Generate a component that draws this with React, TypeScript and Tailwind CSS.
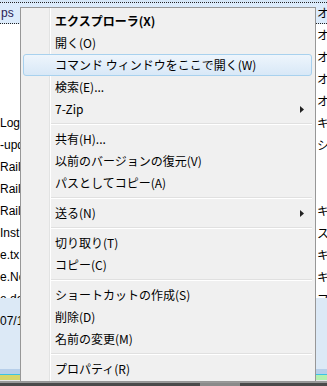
const font = "font-['Noto_Sans_CJK_JP','Noto_Sans_CJK_SC',sans-serif]";

type Entry =
  | { kind: 'item'; label: string; bold?: boolean; active?: boolean; submenu?: boolean }
  | { kind: 'sep' };

const menu: Entry[] = [
  { kind: 'item', label: 'エクスプローラ(X)', bold: true },
  { kind: 'item', label: '開く(O)' },
  { kind: 'item', label: 'コマンド ウィンドウをここで開く(W)', active: true },
  { kind: 'item', label: '検索(E)...' },
  { kind: 'item', label: '7-Zip', submenu: true },
  { kind: 'sep' },
  { kind: 'item', label: '共有(H)...' },
  { kind: 'item', label: '以前のバージョンの復元(V)' },
  { kind: 'item', label: 'パスとしてコピー(A)' },
  { kind: 'sep' },
  { kind: 'item', label: '送る(N)', submenu: true },
  { kind: 'sep' },
  { kind: 'item', label: '切り取り(T)' },
  { kind: 'item', label: 'コピー(C)' },
  { kind: 'sep' },
  { kind: 'item', label: 'ショートカットの作成(S)' },
  { kind: 'item', label: '削除(D)' },
  { kind: 'item', label: '名前の変更(M)' },
  { kind: 'sep' },
  { kind: 'item', label: 'プロパティ(R)' },
];

// rows of the explorer list behind the menu: [name fragment, type fragment]
const rows: [string, string][] = [
  ['ps', 'オフィス'],
  ['', 'オフィス'],
  ['', 'オフィス'],
  ['', 'オフィス'],
  ['', 'オフィス'],
  ['Log', 'キスト'],
  ['-upd', 'ショート'],
  ['Rails', ''],
  ['Rails', ''],
  ['Rails', 'キスト'],
  ['Inst', 'スト'],
  ['e.tx', 'キスト'],
  ['e.Not', 'キスト'],
  ['e.da', 'ファイル'],
];

function Arrow() {
  return (
    <svg width="4" height="7" viewBox="0 0 4 7" className="block">
      <polygon points="0,0 4,3.5 0,7" fill="#222" />
    </svg>
  );
}

function ContextMenu() {
  return (
    <div className="absolute left-[20px] top-[7px] w-[296px] border border-[#979797] bg-[#f0f0f0] pt-[2px] pb-px">
      <div className="absolute inset-y-0 left-[28px] w-px bg-[#e2e3e3]" />
      <div className="absolute inset-y-0 left-[29px] w-px bg-white" />
      {menu.map((m, i) =>
        m.kind === 'sep' ? (
          <div key={i} className="relative flex h-[8px] items-center pl-[30px] pr-[3px]">
            <div className="h-[2px] w-full border-t border-[#e0e0e0] border-b border-b-white" />
          </div>
        ) : (
          <div
            key={i}
            className={
              'relative ml-[2px] mr-[3px] flex h-[22px] items-center justify-between rounded-[3px] border pl-[31px] pr-[7px] text-[12px] text-black ' +
              (m.active
                ? 'border-[#a8d1ee] bg-gradient-to-b from-[#eef5fc] to-[#d8e8f7]'
                : 'border-transparent') +
              (m.bold ? ' font-bold' : '')
            }
          >
            <span className="whitespace-pre leading-none">{m.label}</span>
            {m.submenu && <Arrow />}
          </div>
        )
      )}
    </div>
  );
}

export default function App() {
  return (
    <div className={`relative h-[386px] w-[327px] overflow-hidden bg-white ${font} text-[12px]`}>
      <div className="flex h-[298px] flex-col overflow-hidden">
        <div className="h-[2px] shrink-0 bg-[#d5e6f7]" />
        {rows.map(([name, type], i) => (
          <div
            key={i}
            className={
              'grid h-[22px] shrink-0 grid-cols-[317px_1fr] items-center whitespace-nowrap ' +
              (i === 0 ? 'border-y border-dotted border-[#222] bg-[#dcebfb]' : '')
            }
          >
            <span className={`font-['Liberation_Sans',sans-serif] ${i === 0 ? 'pl-px text-[#2a2055]' : 'text-black'}`}>
              {name}
            </span>
            <span className="overflow-hidden text-black">{type}</span>
          </div>
        ))}
      </div>
      <div className="h-[71px] bg-[#dce9f6] pt-[14px] font-['Liberation_Sans',sans-serif] text-black">
        07/11/2009
      </div>
      <div className="h-[5px] bg-[#b7cfea]" />
      <div className="h-px bg-[#3cc3e6]" />
      <div className="flex h-[5px]">
        <div className="w-[160px] bg-[#d6d66c]" />
        <div className="flex-1 bg-[#b4f0b0]" />
      </div>
      <div className="h-px bg-[#e8e8e8]" />
      <div className="h-[2px] bg-[#9a9a9a]" />
      <div className="flex h-[3px] bg-[#4a4a4a]">
        <div className="ml-[200px] w-[40px] bg-[#8a8a8a]" />
      </div>
      <ContextMenu />
    </div>
  );
}
